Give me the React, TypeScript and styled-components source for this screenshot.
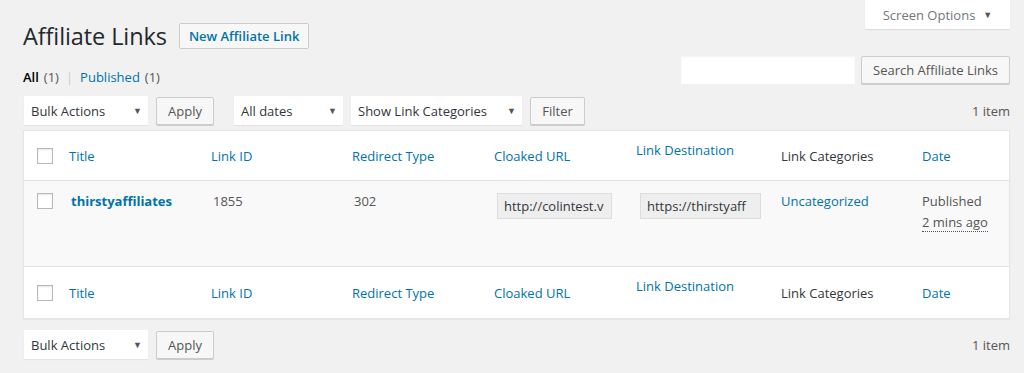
import React from "react";
import styled, { createGlobalStyle } from "styled-components";

const Global = createGlobalStyle`
  html, body { margin: 0; padding: 0; background: #f1f1f1; }
  body { font-family: "Open Sans", "Noto Sans", sans-serif; font-size: 13px; color: #444; }
  * { box-sizing: border-box; }
`;

const Page = styled.div`
  position: relative;
  padding: 0 14px 0 23px;
  height: 373px;
  overflow: hidden;
`;

const ScreenOptions = styled.div`
  position: absolute;
  top: 0;
  right: 14px;
  width: 145px;
  height: 29px;
  background: #fff;
  box-shadow: 0 1px 1px rgba(0, 0, 0, 0.08);
  color: #72777c;
  display: flex;
  align-items: center;
  justify-content: center;
  gap: 8px;
  font-size: 13px;
`;

const Caret = styled.span`
  font-size: 9px;
  color: #555;
`;

const TitleRow = styled.div`
  display: flex;
  align-items: center;
  gap: 12px;
  padding-top: 23px;
  height: 49px;
`;

const H1 = styled.h1`
  margin: 0;
  font-size: 23.5px;
  font-weight: 400;
  color: #23282d;
  line-height: 26px;
  letter-spacing: -0.1px;
`;

const AddNew = styled.span`
  display: inline-flex;
  align-items: center;
  height: 26px;
  padding: 0 9px;
  border: 1px solid #ccc;
  background: #f7f7f7;
  color: #0073aa;
  font-weight: 600;
  font-size: 13px;
  border-radius: 2px;
`;

const SubRow = styled.div`
  display: flex;
  justify-content: space-between;
  align-items: flex-end;
  margin-top: 7px;
  height: 28px;
`;

const Views = styled.div`
  display: flex;
  gap: 5px;
  align-items: center;
  margin-bottom: -2px;
  line-height: 17px;
  font-size: 13px;
`;

const Strong = styled.span`
  font-weight: 600;
  color: #000;
`;
const Count = styled.span`
  color: #555;
`;
const Sep = styled.span`
  color: #ccc;
  padding: 0 2px;
`;
const Link = styled.span`
  color: #0073aa;
`;

const SearchBox = styled.div`
  display: flex;
  gap: 6px;
  align-items: center;
`;

const SearchInput = styled.div`
  width: 174px;
  height: 28px;
  background: #fff;
  box-shadow: inset 0 1px 2px rgba(0, 0, 0, 0.05);
`;

const Button = styled.span<{ $w?: number }>`
  display: inline-flex;
  align-items: center;
  justify-content: center;
  height: 28px;
  padding: 0 10px;
  ${(p) => (p.$w ? `width: ${p.$w}px;` : "")}
  background: #f7f7f7;
  border: 1px solid #ccc;
  border-radius: 2px;
  box-shadow: 0 1px 0 #ccc;
  color: #555;
  font-size: 13px;
`;

const TableNav = styled.div<{ $top?: boolean }>`
  display: flex;
  align-items: center;
  height: 29px;
  margin-top: ${(p) => (p.$top ? "12px" : "11px")};
  margin-bottom: 5px;
  padding-left: 1px;
`;

const Actions = styled.div<{ $gap?: number }>`
  display: flex;
  align-items: center;
  gap: 8px;
  margin-right: ${(p) => p.$gap ?? 0}px;
`;

const Select = styled.div<{ $w: number }>`
  width: ${(p) => p.$w}px;
  height: 29px;
  background: #fff;
  box-shadow: 0 1px 1px rgba(0, 0, 0, 0.05);
  display: flex;
  align-items: center;
  justify-content: space-between;
  padding: 0 6px 0 7px;
  color: #32373c;
  font-size: 13px;
`;

const Count2 = styled.div`
  margin-left: auto;
  color: #555;
  font-size: 13px;
`;

const Table = styled.div`
  background: #fff;
  border: 1px solid #e5e5e5;
  box-shadow: 0 1px 1px rgba(0, 0, 0, 0.04);
`;

const cols = "35px 142px 141px 142px 142px 145px 141px 1fr";

const HeadRow = styled.div<{ $foot?: boolean }>`
  display: grid;
  grid-template-columns: ${cols};
  height: ${(p) => (p.$foot ? "52px" : "50px")};
  align-items: center;
  ${(p) => (p.$foot ? "border-top: 1px solid #e1e1e1;" : "border-bottom: 1px solid #e1e1e1;")}
`;

const Th = styled.div<{ $plain?: boolean; $up?: boolean }>`
  padding-left: 10px;
  color: ${(p) => (p.$plain ? "#32373c" : "#0073aa")};
  font-size: 13px;
  ${(p) => (p.$up ? "align-self: start; padding-top: 10px;" : "")}
`;

const CbCell = styled.div<{ $top?: boolean }>`
  display: flex;
  justify-content: flex-end;
  ${(p) => (p.$top ? "align-self: start; padding-top: 12px;" : "")}
`;

const Check = styled.span`
  width: 16px;
  height: 16px;
  background: #fff;
  border: 1px solid #b4b9be;
  box-shadow: inset 0 1px 2px rgba(0, 0, 0, 0.1);
  margin-right: 6px;
`;

const BodyRow = styled.div`
  display: grid;
  grid-template-columns: ${cols};
  height: 85px;
  background: #f9f9f9;
  align-items: start;
`;

const Td = styled.div<{ $pl?: number; $pt?: number }>`
  padding-left: ${(p) => p.$pl ?? 10}px;
  padding-top: ${(p) => p.$pt ?? 10}px;
  color: #555;
  font-size: 13px;
  line-height: 20px;
`;

const RowTitle = styled.span`
  color: #0073aa;
  font-weight: 700;
  font-size: 13px;
`;

const UrlBox = styled.div<{ $w: number }>`
  width: ${(p) => p.$w}px;
  height: 26px;
  background: #eee;
  border: 1px solid #ddd;
  color: #32373c;
  overflow: hidden;
  white-space: nowrap;
  padding: 0 6px;
  line-height: 24px;
  font-size: 13px;
`;

const Abbr = styled.span`
  border-bottom: 1px dotted #555;
  display: inline-block;
  line-height: 17px;
  margin-top: 3px;
`;

const HeadCells = () => (
  <>
    <CbCell>
      <Check />
    </CbCell>
    <Th>Title</Th>
    <Th>Link ID</Th>
    <Th>Redirect Type</Th>
    <Th>Cloaked URL</Th>
    <Th $up>Link Destination</Th>
    <Th $plain>Link Categories</Th>
    <Th>Date</Th>
  </>
);

export default function App() {
  return (
    <Page>
      <Global />
      <ScreenOptions>
        Screen Options <Caret>▼</Caret>
      </ScreenOptions>
      <TitleRow>
        <H1>Affiliate Links</H1>
        <AddNew>New Affiliate Link</AddNew>
      </TitleRow>
      <SubRow>
        <Views>
          <Strong>All</Strong>
          <Count>(1)</Count>
          <Sep>|</Sep>
          <Link>Published</Link>
          <Count>(1)</Count>
        </Views>
        <SearchBox>
          <SearchInput />
          <Button $w={149}>Search Affiliate Links</Button>
        </SearchBox>
      </SubRow>
      <TableNav $top>
        <Actions $gap={20}>
          <Select $w={124}>
            Bulk Actions <Caret>▼</Caret>
          </Select>
          <Button $w={58}>Apply</Button>
        </Actions>
        <Actions>
          <Select $w={109}>
            All dates <Caret>▼</Caret>
          </Select>
          <Select $w={171}>
            Show Link Categories <Caret>▼</Caret>
          </Select>
          <Button $w={55}>Filter</Button>
        </Actions>
        <Count2>1 item</Count2>
      </TableNav>
      <Table>
        <HeadRow>
          <HeadCells />
        </HeadRow>
        <BodyRow>
          <CbCell $top>
            <Check />
          </CbCell>
          <Td $pl={12}>
            <RowTitle>thirstyaffiliates</RowTitle>
          </Td>
          <Td $pl={12}>1855</Td>
          <Td $pl={12}>302</Td>
          <Td $pl={13} $pt={12}>
            <UrlBox $w={115}>http://colintest.v</UrlBox>
          </Td>
          <Td $pl={14} $pt={12}>
            <UrlBox $w={121}>https://thirstyaff</UrlBox>
          </Td>
          <Td>
            <Link>Uncategorized</Link>
          </Td>
          <Td>
            Published
            <br />
            <Abbr>2 mins ago</Abbr>
          </Td>
        </BodyRow>
        <HeadRow $foot>
          <HeadCells />
        </HeadRow>
      </Table>
      <TableNav>
        <Actions>
          <Select $w={124}>
            Bulk Actions <Caret>▼</Caret>
          </Select>
          <Button $w={58}>Apply</Button>
        </Actions>
        <Count2>1 item</Count2>
      </TableNav>
    </Page>
  );
}
